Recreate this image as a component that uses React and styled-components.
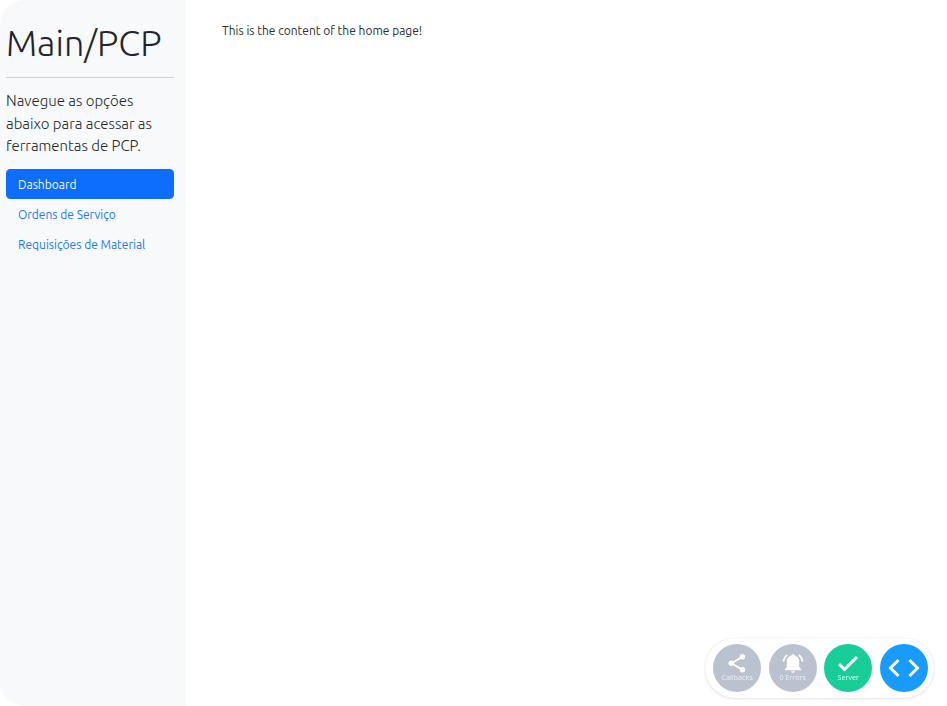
import React from "react";
import styled, { createGlobalStyle } from "styled-components";

const Global = createGlobalStyle`
  * { box-sizing: border-box; }
  body {
    margin: 0;
    background: #fff;
    color: #2a2e32;
    font: 400 12px/18px Ubuntu, "Noto Sans", "Open Sans", sans-serif;
  }
`;
const Page = styled.div`
  display: flex;
  height: 706px;
  overflow: hidden;
`;
const Sidebar = styled.aside`
  width: 186px;
  flex: none;
  padding: 21px 12px 0 6px;
  background: #f8f9fb;
  border-radius: 24px 0 0 24px;
`;
const Title = styled.h1`
  margin: 0;
  font-size: 36px;
  line-height: 44px;
  font-weight: 300;
  color: #212529;
  white-space: nowrap;
`;
const Divider = styled.hr`
  margin: 12px 0;
  border: 0;
  height: 1px;
  background: #d0d2d5;
`;
const Lead = styled.p`
  margin: 0;
  font-size: 15px;
  line-height: 22.5px;
  font-weight: 300;
  color: #212529;
`;
const LeadLine = styled.span`
  display: block;
  white-space: nowrap;
`;
const Line = styled.span`
  display: block;
  white-space: nowrap;
  transform: translateY(0.3px) scaleY(1.1);
`;
const Nav = styled.nav`
  display: flex;
  flex-direction: column;
  margin-top: 11.3px;
`;
const NavLink = styled.a`
  height: 30px;
  padding: 0 12px;
  line-height: 29px;
  border-radius: 4.5px;
  color: ${(p) => (p.$active ? "#f2f7ff" : "#1c76fd")};
  background: ${(p) => (p.$active ? "#0d6efd" : "transparent")};
`;
const Content = styled.main`
  flex: 1;
  padding: 21px 36px;
`;
const DebugMenu = styled.div`
  position: fixed;
  right: 13px;
  bottom: 8px;
  width: 229px;
  height: 60px;
  padding: 0 6px 0 8px;
  display: flex;
  align-items: center;
  justify-content: space-between;
  background: #fff;
  border-radius: 30px;
  box-shadow: 0 0 1px rgba(80, 90, 120, 0.2), 0 1px 3px rgba(80, 90, 120, 0.14);
`;
const DebugButton = styled.div`
  width: 48px;
  height: 48px;
  border-radius: 50%;
  display: flex;
  flex-direction: column;
  align-items: center;
  justify-content: center;
  background: ${(p) => p.$color};
  svg { display: block; flex: none; }
`;
const Label = styled.span`
  margin-top: -1px;
  margin-bottom: 1px;
  font: 400 7.2px/8px "Open Sans", "Noto Sans", sans-serif;
  color: ${(p) => p.$color};
  white-space: nowrap;
  transform: translateY(-0.3px) scaleY(1.05);
`;

const ShareIcon = () => (
  <svg width="18" height="20" viewBox="0 0 18 20" fill="#fff">
    <path d="M14.4 2.7 3.6 9.200l10.800 6.500" fill="none" stroke="#fff" strokeWidth="1.8" />
    <circle cx="14.4" cy="2.8" r="2.7" />
    <circle cx="3.2" cy="9.2" r="2.7" />
    <circle cx="14.4" cy="15.7" r="2.7" />
  </svg>
);
const BellIcon = () => (
  <svg width="22" height="20" viewBox="0 0 22 20" fill="#fff">
    <path d="M9.500 1.500a1.500 1.500 0 0 1 3 0c3.200.7 4.700 3 4.700 6v5.500l2 2.200v1H2.800v-1l2-2.200V7.500c0-3 1.500-5.300 4.700-6Z" />
    <path d="M9 17.200h4a2 1.500 0 0 1-4 0Z" />
    <path d="M5 1Q2 3.500 1.300 7.500M17 1q3 2.500 3.700 6.500" fill="none" stroke="#fff" strokeWidth="1.800" />
  </svg>
);
const CheckIcon = () => (
  <svg width="22" height="20" viewBox="0 0 22 20">
    <path d="m2 10 5.500 5.300L20 3" fill="none" stroke="#fff" strokeWidth="3" />
  </svg>
);
const CodeIcon = () => (
  <svg width="32" height="20" viewBox="0 0 32 20">
    <path d="M10.500 2 2.500 10l8 8M21.500 2l8 8-8 8" fill="none" stroke="#fff" strokeWidth="3" />
  </svg>
);

export default function App() {
  return (
    <>
      <Global />
      <Page>
        <Sidebar>
          <Title>Main/PCP</Title>
          <Divider />
          <Lead>
            <LeadLine>Navegue as opções</LeadLine>
            <LeadLine>abaixo para acessar as</LeadLine>
            <LeadLine>ferramentas de PCP.</LeadLine>
          </Lead>
          <Nav>
            <NavLink $active><Line>Dashboard</Line></NavLink>
            <NavLink><Line>Ordens de Serviço</Line></NavLink>
            <NavLink><Line>Requisições de Material</Line></NavLink>
          </Nav>
        </Sidebar>
        <Content>
          <Line>This is the content of the home page!</Line>
        </Content>
      </Page>
      <DebugMenu>
        <DebugButton $color="#b9c2ce"><ShareIcon /><Label $color="#eef0f4">Callbacks</Label></DebugButton>
        <DebugButton $color="#b9c2ce"><BellIcon /><Label $color="#eef0f4">0 Errors</Label></DebugButton>
        <DebugButton $color="#19cd98"><CheckIcon /><Label $color="#e5faf3">Server</Label></DebugButton>
        <DebugButton $color="#199bfb"><CodeIcon /></DebugButton>
      </DebugMenu>
    </>
  );
}
